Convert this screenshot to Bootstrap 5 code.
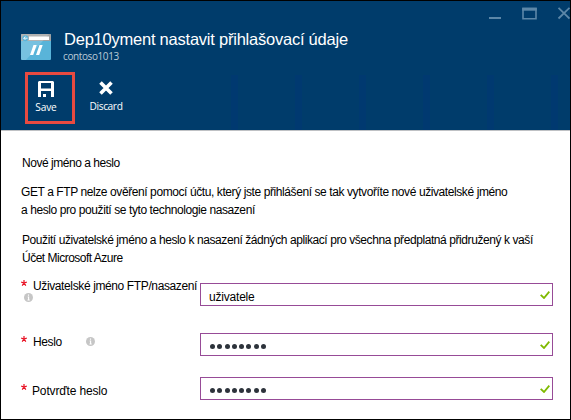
<!DOCTYPE html>
<html lang="cs">
<head>
<meta charset="utf-8">
<meta name="viewport" content="width=device-width, initial-scale=1">
<title>Dep10yment nastavit přihlašovací údaje</title>
<link href="https://cdn.jsdelivr.net/npm/bootstrap@5.3.0/dist/css/bootstrap.min.css" rel="stylesheet">
<style>
body{font-family:"Liberation Sans",Arial,sans-serif;font-size:12px;line-height:18px;color:#000}
.blade{width:571px;height:420px;border:1px solid #000;background:#fff}
.blade-head{height:130px;background:#003c6b;border-bottom:1px solid #bfc1c4;color:#fff}
.win-row{height:24px;padding-top:6px}
.title-row{padding:4px 0 0 20px;height:47px}
.title-text{width:506px}
.blade-title{font-size:16.5px;line-height:20px;white-space:nowrap;letter-spacing:-.23px}
.blade-sub{font:10px/12px "Open Sans",sans-serif;letter-spacing:-.4px;color:#bccbd8;margin:1px 0 0 -1px}
.commands{height:58px;padding-left:24px;background:repeating-linear-gradient(90deg,#003970 0 7px,transparent 7px 64px) 230px 3px/340px 55px no-repeat}
.cmd{height:52px;width:50px;font:10.2px/14px "Open Sans",sans-serif;letter-spacing:-.2px;color:#fff;background:none;border:0;padding:0}
.cmd-marked{border:3px solid #e84a40}
.cmd-save{padding:6px 8px 0 0}
.cmd-discard{padding-top:9px;margin-left:6px;letter-spacing:-.4px}
.cmd span{margin-top:3px}
.cmd-discard span{margin-top:4px}
.blade-body{padding:23px 17px 0 20px}
.txt{white-space:nowrap;letter-spacing:-.41px}
.intro{padding-left:1px;letter-spacing:-.47px;margin-bottom:11px}
.hint{padding-left:1px;margin:12px 0 16px}
.hint .wide{letter-spacing:-.42px}
.hint .owner{letter-spacing:-.5px}
.field{width:353px}
.field .form-control{height:23px;border:1px solid #974b97;border-radius:0;padding:4px 8px 0;font-size:12px;line-height:18px;color:#000;letter-spacing:-.2px;box-shadow:none}
.tick{right:3px;top:8px}
.lbl{width:179px;white-space:nowrap;letter-spacing:-.38px}
.star{margin:3px 6px 0 0;flex:none}
.name-row{height:23px}
.name-row .lbl{margin-top:-6px}
.name-row .about{margin:-2px 0 0 3px}
.pass-row{margin-top:27px}
.again-row{margin-top:21px}
.again-row .lbl{margin-top:5px;letter-spacing:-.15px}
.again-row .star{margin:2px 5px 0 0}
.dots{gap:2.3px}
.field .dots{padding:3px 9px 0}
.dots i{width:5px;height:5px;border-radius:50%;background:#2d333b}
</style>
<script src="https://cdn.jsdelivr.net/npm/bootstrap@5.3.0/dist/js/bootstrap.bundle.min.js"></script>
</head>
<body>
<svg class="d-none">
<symbol id="info" viewBox="0 0 9 9"><circle cx="4.5" cy="4.5" r="4.5" fill="#c6c6c6"/><path d="M4.500 1.500v1.300M3.700 4h.9v2.700M3.500 7h2.200" stroke="#fff" stroke-width="1.100" fill="none"/></symbol>
<symbol id="tick" viewBox="0 0 10 8"><path d="M.7 3.800 4 7 9.300.700" stroke="#7fba00" stroke-width="1.800" fill="none"/></symbol>
<symbol id="star" viewBox="0 0 6 6"><path d="M3 0v3M.2 2.200 3 3l2.800-.8M1.200 5.700 3 3l1.800 2.700" stroke="#e81123" stroke-width="1.200" fill="none"/></symbol>
</svg>
<main class="blade overflow-hidden">
<header class="blade-head">
<div class="win-row d-flex justify-content-end">
<svg width="82" height="14" viewBox="0 0 82 14" fill="none" stroke="#5c87a8"><path d="M1 11h12" stroke-width="2"/><path d="M35 1.500v10.300h13V1.500z" stroke-width="1.600"/><path d="M34.200 2.200h14.600" stroke-width="3"/><path d="M70.500.800 81.500 11.500M81.500.800 70.500 11.500" stroke-width="1.800"/></svg>
</div>
<div class="title-row d-flex">
<svg class="flex-shrink-0 mt-1" width="30" height="27" viewBox="0 0 30 27"><rect y="1" width="30" height="26" rx="1" fill="#59b4d9"/><path d="M0 8V2a1 1 0 0 1 1-1h28a1 1 0 0 1 1 1v6H0z" fill="#a0a1a2"/><path d="M0 8V2a1 1 0 0 1 1-1h27L5 27H1a1 1 0 0 1-1-1z" fill="#fff" opacity=".18"/><rect x="8" y="3.500" width="20" height="3.500" fill="#fff"/><circle cx="4.300" cy="5.200" r="3" fill="#59b4d9"/><path d="M6.500 5.200H2.800M4.400 3.500 2.700 5.200l1.700 1.700" stroke="#fff" fill="none" stroke-width=".9"/><path d="M12.500 12h3.200l-3.500 10H9zM18.500 12h3.200l-3.500 10H15z" fill="#fff"/></svg>
<div class="title-text ms-auto"><h1 class="blade-title fw-normal mb-0">Dep10yment nastavit přihlašovací údaje</h1><div class="blade-sub">contoso1013</div></div>
</div>
<div class="commands d-flex">
<button class="cmd cmd-marked cmd-save d-flex flex-column align-items-center"><svg width="16" height="16" viewBox="0 0 16 16"><path d="M1 0h14l1 1v15H0V1zM3 2v5.500h10V2zM3 10v6h2v-3h3v3h5v-6z" fill="#fff" fill-rule="evenodd"/></svg><span>Save</span></button>
<button class="cmd cmd-discard d-flex flex-column align-items-center"><svg width="14" height="14" viewBox="0 0 14 14"><path d="M1.500 1.500 12.500 12.500M12.500 1.500 1.500 12.500" stroke="#fff" stroke-width="3.600"/></svg><span>Discard</span></button>
</div>
</header>
<section class="blade-body">
<p class="txt intro">Nové jméno a heslo</p>
<p class="txt mb-0">GET a FTP nelze ověření pomocí účtu, který jste přihlášení se tak vytvoříte nové uživatelské jméno<br>a heslo pro použití se tyto technologie nasazení</p>
<p class="txt hint"><span class="wide">Použití uživatelské jméno a heslo k nasazení žádných aplikací pro všechna předplatná přidružený k vaší</span><br><span class="owner">Účet Microsoft Azure</span></p>
<form>
<div class="name-row d-flex align-items-start">
<label class="lbl" for="user"><span class="d-flex"><svg class="star" width="6" height="6"><use href="#star"/></svg>Uživatelské jméno FTP/nasazení</span><svg class="about d-block" width="9" height="9"><use href="#info"/></svg></label>
<div class="field position-relative"><input id="user" class="form-control" value="uživatele"><svg class="tick position-absolute" width="10" height="8"><use href="#tick"/></svg></div>
</div>
<div class="pass-row d-flex align-items-start">
<div class="lbl d-flex"><svg class="star" width="6" height="6"><use href="#star"/></svg>Heslo<svg class="ms-4 mt-1" width="9" height="9"><use href="#info"/></svg></div>
<div class="field position-relative"><div class="form-control dots d-flex align-items-center"><i></i><i></i><i></i><i></i><i></i><i></i><i></i><i></i></div><svg class="tick position-absolute" width="10" height="8"><use href="#tick"/></svg></div>
</div>
<div class="again-row d-flex align-items-start">
<div class="lbl d-flex"><svg class="star" width="6" height="6"><use href="#star"/></svg>Potvrďte heslo</div>
<div class="field position-relative"><div class="form-control dots d-flex align-items-center"><i></i><i></i><i></i><i></i><i></i><i></i><i></i><i></i></div><svg class="tick position-absolute" width="10" height="8"><use href="#tick"/></svg></div>
</div>
</form>
</section>
</main>
</body>
</html>
